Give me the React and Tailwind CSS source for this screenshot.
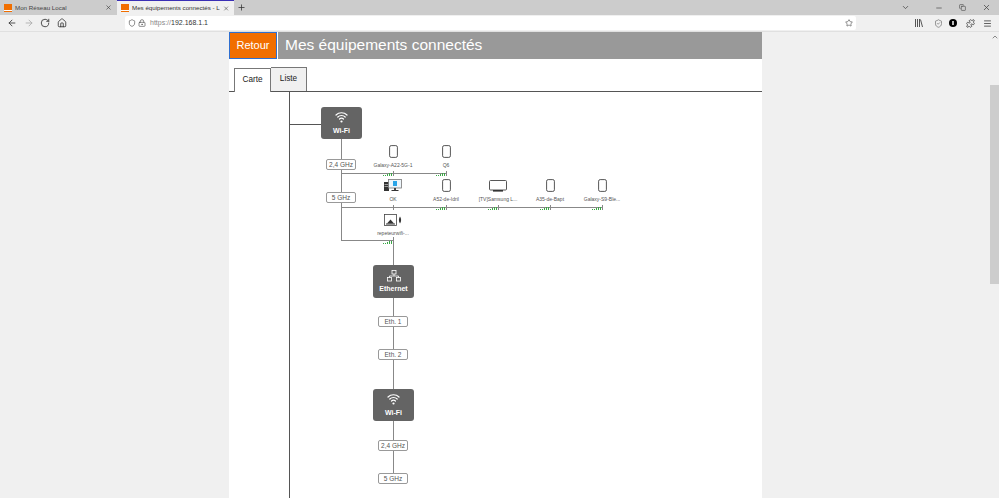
import React from 'react'
import { ArrowLeft, ArrowRight, RotateCw, Home, Shield, LockKeyhole, Star, Menu, X, Plus, ChevronDown, ChevronUp, Minus, Copy, Puzzle, ShieldCheck } from 'lucide-react'

const Favicon = () => (
  <div className="w-[8px] h-[8px] bg-[#f16e00] flex items-end shrink-0">
    <div className="w-full h-[1px] mb-[1px] bg-white"></div>
  </div>
)

// petites barres de signal vert
const Signal = () => (
  <div className="flex items-end gap-[1px] h-[4px]">
    <div className="w-[1px] h-[1px] bg-[#3aa845]"></div>
    <div className="w-[1px] h-[1px] bg-[#3aa845]"></div>
    <div className="w-[1px] h-[2px] bg-[#3aa845]"></div>
    <div className="w-[1px] h-[3px] bg-[#3aa845]"></div>
    <div className="w-[1px] h-[3px] bg-[#3aa845]"></div>
  </div>
)

const PhoneIcon = () => (
  <svg width="9" height="13" viewBox="0 0 9 13" className="ml-[1px]">
    <rect x="0.6" y="0.6" width="7.8" height="11.8" rx="1.6" fill="#fff" stroke="#444" strokeWidth="0.9" />
  </svg>
)

const TvIcon = () => (
  <svg width="18" height="12" viewBox="0 0 18 12">
    <rect x="0.5" y="0.5" width="17" height="9.5" rx="1" fill="#fff" stroke="#444" strokeWidth="0.9" />
    <rect x="4" y="10" width="10" height="1.6" fill="#333" />
  </svg>
)

const PcIcon = () => (
  <svg width="18" height="13" viewBox="0 0 18 13">
    <rect x="0" y="3" width="5" height="9" fill="#333" />
    <rect x="0.5" y="5" width="4" height="1" fill="#999" />
    <rect x="0.5" y="7" width="4" height="1" fill="#999" />
    <rect x="4.5" y="0.5" width="13" height="8.5" fill="#eef6fb" stroke="#777" strokeWidth="0.8" />
    <rect x="9" y="2" width="4" height="5" fill="#2aa5e8" />
    <rect x="10" y="9" width="2" height="2" fill="#444" />
    <rect x="7.5" y="11" width="7" height="1" fill="#333" />
  </svg>
)

const RepeaterIcon = () => (
  <svg width="18" height="12" viewBox="0 0 18 12">
    <rect x="0.5" y="0.5" width="12" height="11" fill="#fff" stroke="#444" strokeWidth="0.8" />
    <path d="M3 9.5 L6.5 5.5 L10 9.5 Z" fill="#333" />
    <rect x="2" y="9.5" width="9" height="1" fill="#333" />
    <path d="M16 2.5 C14.5 4.5 14.5 7.5 16 9.5 C17.5 7.5 17.5 4.5 16 2.5 Z" fill="#333" />
  </svg>
)

const WifiGlyph = () => (
  <svg width="13" height="13" viewBox="0 0 13 13" fill="none" stroke="white" strokeWidth="1.2" strokeLinecap="round">
    <path d="M1 4 C4 1 9 1 12 4" />
    <path d="M2.8 6 C4.8 4 8.2 4 10.2 6" />
    <path d="M4.5 8 C5.6 7 7.4 7 8.5 8" />
    <circle cx="6.5" cy="10.5" r="1.1" fill="white" stroke="none" />
  </svg>
)

const EthernetGlyph = () => (
  <svg width="14" height="12" viewBox="0 0 14 12" fill="none" stroke="white" strokeWidth="0.8">
    <rect x="5" y="0.5" width="4" height="3.5" />
    <rect x="0.5" y="7.5" width="4" height="3.5" />
    <rect x="9.5" y="7.5" width="4" height="3.5" />
    <path d="M7 4 V6 M2.5 7.5 V6 H11.5 V7.5" />
  </svg>
)

const Device = ({ pos, icon, label, wifi = true }) => (
  <div className={`absolute w-[70px] flex flex-col items-center ${pos}`}>
    <div className="h-[13px] flex items-center justify-center">{icon}</div>
    <div className="mt-[2px] h-[10px] leading-[10px] text-[5px] text-[#555] whitespace-nowrap">{label}</div>
    <div className="relative w-full h-[5px] mt-[1px]">
      {wifi && (
        <div className="absolute right-[36px] bottom-0">
          <Signal />
        </div>
      )}
      <div className="absolute left-[35px] top-0 w-[1px] h-[5px] bg-[#888]"></div>
    </div>
  </div>
)

const Freq = ({ pos, children }) => (
  <div className={`absolute w-[30px] h-[11px] flex items-center justify-center bg-white border border-[#999] rounded-[2px] text-[6.5px] text-[#555] ${pos}`}>
    {children}
  </div>
)

const Box = ({ pos, icon, label }) => (
  <div className={`absolute w-[41px] bg-[#646464] rounded-[3px] flex flex-col items-center justify-center text-white text-[7px] font-bold ${pos}`}>
    {icon}
    <span className="mt-[2px] leading-[9px]">{label}</span>
  </div>
)

const App = () => {
  return (
    <div className="w-[999px] h-[498px] overflow-hidden flex flex-col bg-[#f0f0f0] font-['Liberation_Sans',sans-serif]">
      {/* BARRE D'ONGLETS */}
      <div className="h-[15px] bg-[#cccccc] flex items-stretch text-[6.2px] text-[#333] shrink-0">
        <div className="w-[117px] flex items-center pl-[4px] pr-[5px] gap-[3px]">
          <Favicon />
          <span className="flex-1 text-[#444]">Mon Réseau Local</span>
          <X size={7} />
        </div>
        <div className="w-[117px] flex items-center pl-[4px] pr-[5px] gap-[3px] bg-[#f0f0f0] border-t border-[#3a2fb5]">
          <Favicon />
          <span className="flex-1 whitespace-nowrap">Mes équipements connectés - L</span>
          <X size={7} />
        </div>
        <div className="w-[14px] flex items-center justify-center">
          <Plus size={9} />
        </div>
        <div className="flex-1 flex items-center justify-end text-[#444] pr-[8px]">
          <ChevronDown size={9} />
          <Minus size={8} className="ml-[25px]" />
          <Copy size={7} className="ml-[16px]" />
          <X size={9} className="ml-[16px]" />
        </div>
      </div>

      {/* BARRE D'ADRESSE */}
      <div className="h-[17px] bg-[#f0f0f0] flex items-center border-b border-[#e0e0e0] text-[#333] shrink-0">
        <div className="w-[125px] flex items-center pl-[7px] gap-[6.5px]">
          <ArrowLeft size={10} />
          <ArrowRight size={10} className="text-[#aaa]" />
          <RotateCw size={10} />
          <Home size={10} />
        </div>
        <div className="w-[731px] h-[14px] bg-white rounded-[2px] flex items-center px-[3px] text-[7px]">
          <Shield size={8} className="text-[#555]" />
          <LockKeyhole size={8} className="ml-[2px] text-[#555]" />
          <span className="ml-[4px] text-[#888]">https://</span>
          <span className="text-[#333]">192.168.1.1</span>
          <Star size={8} className="ml-auto text-[#555]" />
        </div>
        <div className="flex-1 flex items-center pl-[59px]">
          <svg width="8" height="8" viewBox="0 0 8 8" className="shrink-0">
            <path d="M0.5 0 V8 M2.5 0 V8 M4.5 0 V8 M5.5 0.5 L7.5 8" stroke="#555" strokeWidth="1" fill="none" />
          </svg>
          <ShieldCheck size={9} className="ml-[11px] text-[#777] shrink-0" />
          <div className="ml-[6px] w-[8px] h-[8px] rounded-full bg-black shrink-0 flex items-center justify-center">
            <div className="w-[2px] h-[4px] bg-[#bbb]"></div>
          </div>
          <Puzzle size={9} className="ml-[9px] shrink-0" />
          <Menu size={9} className="ml-[8px] shrink-0" />
        </div>
      </div>

      {/* CONTENU */}
      <div className="flex-1 flex min-h-0">
        <div className="w-[229px] shrink-0"></div>
        <div className="w-[533px] bg-white flex flex-col shrink-0">
          {/* ENTETE */}
          <div className="h-[27px] flex shrink-0 gap-[1px]">
            <button className="w-[48px] bg-[#f16e00] border border-[#2f6fd0] text-white text-[11px]">Retour</button>
            <div className="flex-1 bg-[#999999] text-white text-[15.5px] pl-[7px] pb-[1px] flex items-center">Mes équipements connectés</div>
          </div>

          {/* ONGLETS */}
          <div className="h-[33px] pt-[9px] flex items-end border-b border-[#555] shrink-0 pl-[5px]">
            <div className="w-[37px] h-[24px] -mb-[1px] bg-white border border-b-0 border-[#777] flex items-center justify-center text-[8.2px] text-[#222]">Carte</div>
            <div className="w-[36px] h-[24px] bg-[#f0f0f0] border border-l-0 border-b-0 border-[#777] flex items-center justify-center text-[8.2px] text-[#222]">Liste</div>
          </div>

          {/* CARTE */}
          <div className="relative flex-1 overflow-hidden">
            <div className="absolute left-[60px] top-0 w-[1px] h-[406px] bg-[#555]"></div>
            <div className="absolute left-[60px] top-[32px] w-[32px] h-[1px] bg-[#555]"></div>

            {/* liaisons */}
            <div className="absolute left-[112px] top-[47px] w-[1px] h-[101px] bg-[#888]"></div>
            <div className="absolute left-[112px] top-[81px] w-[105px] h-[1px] bg-[#888]"></div>
            <div className="absolute left-[112px] top-[115px] w-[261px] h-[1px] bg-[#888]"></div>
            <div className="absolute left-[112px] top-[148px] w-[52px] h-[1px] bg-[#888]"></div>
            <div className="absolute left-[164px] top-[145px] w-[1px] h-[236px] bg-[#888]"></div>

            <Box pos="left-[92px] top-[15px] h-[32px]" icon={<WifiGlyph />} label="Wi-Fi" />
            <Freq pos="left-[97px] top-[67px]">2,4 GHz</Freq>
            <Freq pos="left-[97px] top-[100px]">5 GHz</Freq>

            <Device pos="left-[129px] top-[53px]" icon={<PhoneIcon />} label="Galaxy-A22-5G-1" />
            <Device pos="left-[182px] top-[53px]" icon={<PhoneIcon />} label="Q6" />

            <Device pos="left-[129px] top-[87px]" icon={<PcIcon />} label="OK" wifi={false} />
            <Device pos="left-[182px] top-[87px]" icon={<PhoneIcon />} label="A52-de-Idril" />
            <Device pos="left-[234px] top-[87px]" icon={<TvIcon />} label="[TV]Samsung L..." />
            <Device pos="left-[286px] top-[87px]" icon={<PhoneIcon />} label="A35-de-Bapt" />
            <Device pos="left-[338px] top-[87px]" icon={<PhoneIcon />} label="Galaxy-S9-Ble..." />

            <Device pos="left-[129px] top-[121px]" icon={<RepeaterIcon />} label="repeteurwifi-..." />

            <Box pos="left-[144px] top-[173px] h-[33px]" icon={<EthernetGlyph />} label="Ethernet" />
            <Freq pos="left-[149px] top-[224px]">Eth. 1</Freq>
            <Freq pos="left-[149px] top-[257px]">Eth. 2</Freq>

            <Box pos="left-[144px] top-[297px] h-[32px]" icon={<WifiGlyph />} label="Wi-Fi" />
            <Freq pos="left-[149px] top-[348px]">2,4 GHz</Freq>
            <Freq pos="left-[149px] top-[381px]">5 GHz</Freq>
          </div>
        </div>
        <div className="flex-1"></div>
        {/* ASCENSEUR */}
        <div className="w-[9px] shrink-0 flex flex-col items-center">
          <ChevronUp size={8} className="mt-[1px] text-[#555]" />
          <div className="w-full h-[199px] mt-[44px] bg-[#cdcdcd]"></div>
        </div>
      </div>
    </div>
  )
}

export default App
